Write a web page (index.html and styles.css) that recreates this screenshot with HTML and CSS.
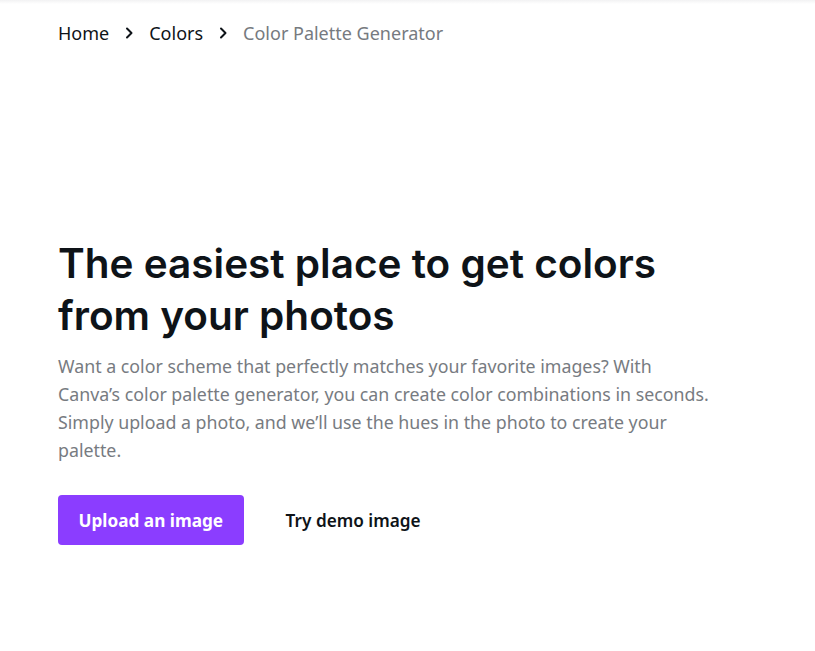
FILE: index.html
```html
<!DOCTYPE html>
<html lang="en">
<head>
<meta charset="utf-8">
<title>Color Palette Generator</title>
<link rel="stylesheet" href="styles.css">
</head>
<body>
<div class="topshade"></div>
<main class="page">
  <nav class="crumbs">
    <a class="crumb" href="#">Home</a>
    <svg class="chev" viewBox="0 0 16 16" width="16" height="16"><path d="M6 3.5l4.5 4.5-4.5 4.5" fill="none" stroke="currentColor" stroke-width="2" stroke-linecap="round" stroke-linejoin="round"/></svg>
    <a class="crumb" href="#">Colors</a>
    <svg class="chev" viewBox="0 0 16 16" width="16" height="16"><path d="M6 3.5l4.5 4.5-4.5 4.5" fill="none" stroke="currentColor" stroke-width="2" stroke-linecap="round" stroke-linejoin="round"/></svg>
    <span class="crumb current">Color Palette Generator</span>
  </nav>
  <section class="hero">
    <h1 class="title">The easiest place to get colors from your photos</h1>
    <p class="lead">Want a color scheme that perfectly matches your favorite images? With<br>Canva’s color palette generator, you can create color combinations in seconds. Simply upload a photo, and we’ll use the hues in the photo to create your palette.</p>
    <div class="actions">
      <button class="btn primary">Upload an image</button>
      <button class="btn ghost">Try demo image</button>
    </div>
  </section>
</main>
</body>
</html>
```
FILE: styles.css
```css
* { box-sizing: border-box; }
html, body { margin: 0; padding: 0; background: #fff; }
body { font-family: "Noto Sans", "Open Sans", sans-serif; color: #0e1318; }
.topshade { height: 4px; background: linear-gradient(#f2f2f3, #fff); }
.page { padding: 0 58px; }
.crumbs { display: flex; align-items: center; height: 58px; font-size: 18px; }
.crumb { color: #0e1318; text-decoration: none; }
.crumb.current { color: #767a80; }
.chev { margin: 0 12px; color: #0e1318; }
.hero { margin-top: 176px; }
.title { font-family: "Inter", sans-serif; font-weight: 600; font-size: 40.5px; line-height: 52px; letter-spacing: 0; margin: 0; max-width: 660px; color: #0e1318; }
.lead { font-size: 17.8px; line-height: 28px; color: #777b81; margin: 10px 0 0; max-width: 668px; }
.actions { display: flex; align-items: center; gap: 42px; margin-top: 31px; }
.btn { font-family: "Noto Sans", sans-serif; font-size: 17.2px; border: 0; cursor: pointer; }
.btn.primary { background: #8b3dff; color: #fff; font-weight: 700; height: 50px; padding: 0 20.5px; border-radius: 4px; }
.btn.ghost { background: none; color: #0e1318; font-weight: 600; padding: 0; }
```
